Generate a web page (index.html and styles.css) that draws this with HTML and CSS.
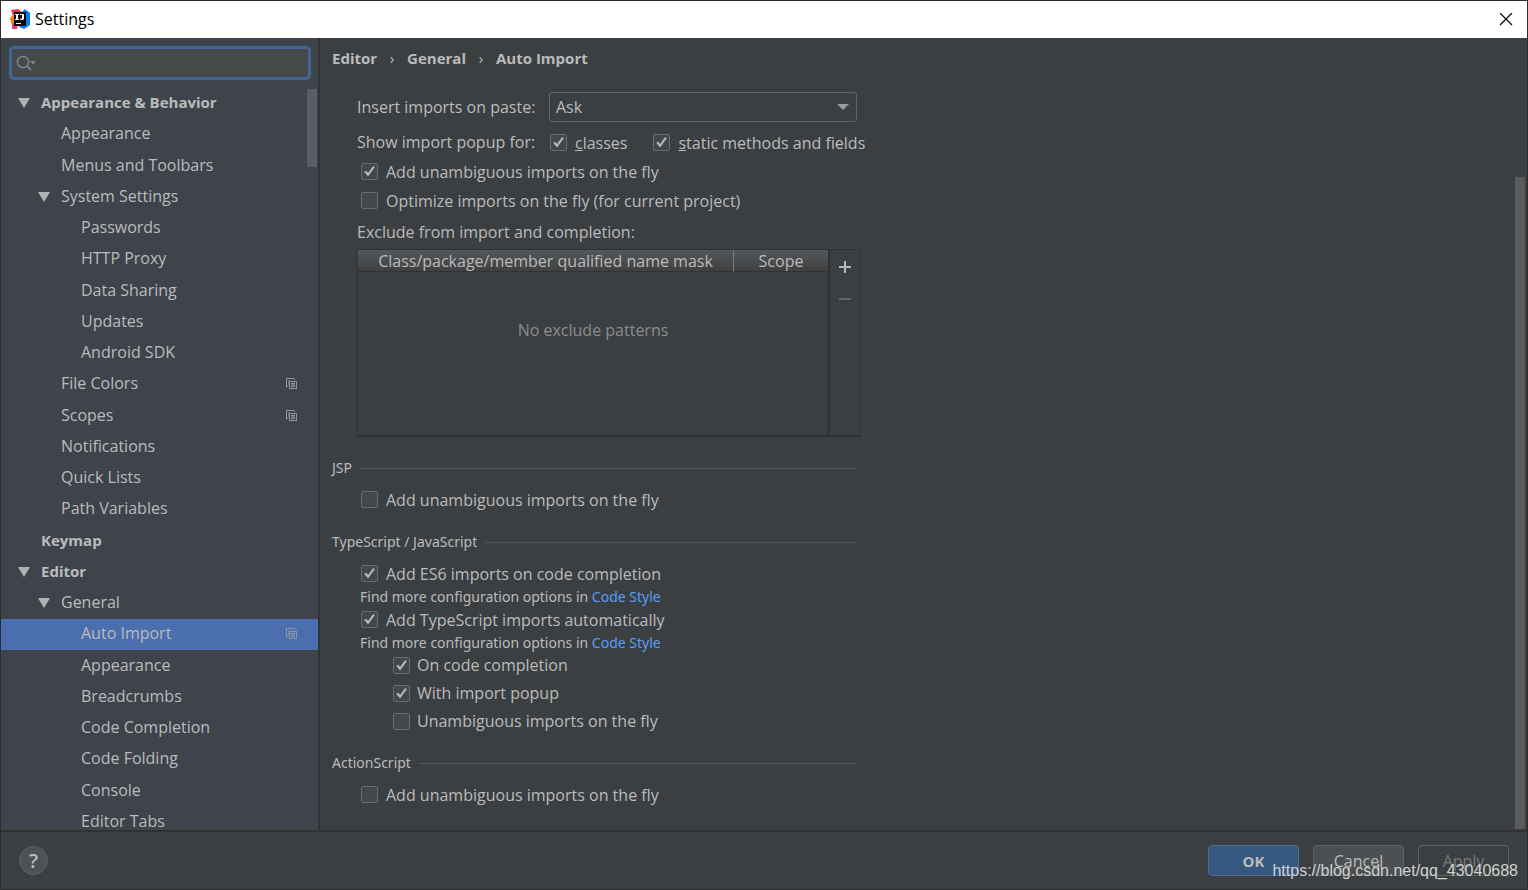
FILE: index.html
```html
<!DOCTYPE html>
<html lang="en">
<head>
<meta charset="utf-8">
<title>Settings</title>
<link rel="stylesheet" href="styles.css">
</head>
<body>
<svg class="defs" aria-hidden="true">
  <symbol id="copy" viewBox="0 0 12 12"><path d="M0 1h9v1H1v7h1v1H0z" fill="currentColor"/><path d="M8 2h1v1H3v6H2V3h6z" fill="currentColor" opacity=".45"/><path fill-rule="evenodd" d="M3 4h8v8H3zM4 5v6h6V5z" fill="currentColor"/><path d="M5 6h4v1H5zM5 7.500h4v1H5zM5 9h4v1H5z" fill="currentColor"/></symbol>
  <symbol id="arrow" viewBox="0 0 12 12"><path d="M0 2h12L6 12z" fill="currentColor"/></symbol>
</svg>
<div class="window">
  <header class="titlebar">
    <svg class="logo" viewBox="0 0 20 20" aria-hidden="true">
      <path d="M1 0l7-1 4 3-2 8-8 2-1-4 2-2z" fill="#f5315f"/>
      <path d="M0 8l4-4 3 8-2 5-4-4z" fill="#fc801d"/>
      <path d="M2 13l6 2-1 4-5 0z" fill="#e8417c"/>
      <path d="M12 2l3-3 5 4v12l-6 4-5-2z" fill="#087cfa"/>
      <path d="M4 2h12v14H4z" fill="#0b0b0d"/>
      <path d="M5 4h4v1H8v4h1v1H5V9h1V5H5zM10 4h4v5l-1 1h-2l-1-1 1-1 1 1V5h-2zM6 13h5v1H6z" fill="#fff"/>
    </svg>
    <h1 class="title">Settings</h1>
    <button class="close" aria-label="Close"><svg viewBox="0 0 14 14"><path d="M1 0l12 12M13 0L1 12" stroke="#000" stroke-width="1.200"/></svg></button>
  </header>
  <div class="panes">
    <aside class="sidebar">
      <div class="search">
        <svg class="search-icon" viewBox="0 0 21 16" aria-hidden="true"><circle cx="7" cy="7" r="5.600" fill="none" stroke="#7d8488" stroke-width="1.500"/><path d="M11 11l4 4" stroke="#7d8488" stroke-width="1.800"/><path d="M14 6h6l-3 3.500z" fill="#7d8488"/></svg>
        <input class="search-input" type="text" aria-label="Search settings">
      </div>
      <nav class="tree-wrap" aria-label="Settings categories">
        <ul class="tree">
          <li class="node root"><svg class="twisty"><use href="#arrow"/></svg>Appearance &amp; Behavior</li>
          <li class="node level-2">Appearance</li>
          <li class="node level-2">Menus and Toolbars</li>
          <li class="node level-2"><svg class="twisty"><use href="#arrow"/></svg>System Settings</li>
          <li class="node level-3">Passwords</li>
          <li class="node level-3">HTTP Proxy</li>
          <li class="node level-3">Data Sharing</li>
          <li class="node level-3">Updates</li>
          <li class="node level-3">Android SDK</li>
          <li class="node level-2">File Colors<svg class="badge"><use href="#copy"/></svg></li>
          <li class="node level-2">Scopes<svg class="badge"><use href="#copy"/></svg></li>
          <li class="node level-2">Notifications</li>
          <li class="node level-2">Quick Lists</li>
          <li class="node level-2">Path Variables</li>
          <li class="node root">Keymap</li>
          <li class="node root"><svg class="twisty"><use href="#arrow"/></svg>Editor</li>
          <li class="node level-2"><svg class="twisty"><use href="#arrow"/></svg>General</li>
          <li class="node level-3 selected">Auto Import<svg class="badge"><use href="#copy"/></svg></li>
          <li class="node level-3">Appearance</li>
          <li class="node level-3">Breadcrumbs</li>
          <li class="node level-3">Code Completion</li>
          <li class="node level-3">Code Folding</li>
          <li class="node level-3">Console</li>
          <li class="node level-3">Editor Tabs</li>
        </ul>
        <div class="tree-thumb"></div>
      </nav>
    </aside>
    <main class="content">
      <div class="page">
        <nav class="crumbs" aria-label="Breadcrumb"><span>Editor</span><span class="sep">›</span><span>General</span><span class="sep">›</span><span>Auto Import</span></nav>
        <div class="java">
          <div class="paste-row">
            <label class="row-label" for="paste">Insert imports on paste:</label>
            <div class="select-wrap">
              <select id="paste" class="select"><option>Ask</option></select>
              <svg class="select-arrow" viewBox="0 0 12 6" aria-hidden="true"><path d="M0 0h12L6 6z" fill="#9a9da0"/></svg>
            </div>
          </div>
          <div class="popup-row">
            <span class="row-label">Show import popup for:</span>
            <label class="check"><input type="checkbox" checked><span><u>c</u>lasses</span></label>
            <label class="check"><input type="checkbox" checked><span><u>s</u>tatic methods and fields</span></label>
          </div>
          <label class="check inset"><input type="checkbox" checked><span>Add unambiguous imports on the fly</span></label>
          <label class="check inset"><input type="checkbox"><span>Optimize imports on the fly (for current project)</span></label>
          <div class="table-label" id="exclude">Exclude from import and completion:</div>
          <div class="exclude">
            <table class="table" aria-labelledby="exclude">
              <thead><tr><th class="mask">Class/package/member qualified name mask</th><th>Scope</th></tr></thead>
              <tbody><tr><td colspan="2">No exclude patterns</td></tr></tbody>
            </table>
            <div class="tools">
              <button class="tool" aria-label="Add"><svg viewBox="0 0 14 14"><path d="M6 1h2v5h5v2H8v5H6V8H1V6h5z" fill="#b4b6b8"/></svg></button>
              <button class="tool" aria-label="Remove" disabled><svg viewBox="0 0 14 14"><path d="M1 6h12v2H1z" fill="#626466"/></svg></button>
            </div>
          </div>
        </div>
        <h2 class="section">JSP</h2>
        <label class="check inset"><input type="checkbox"><span>Add unambiguous imports on the fly</span></label>
        <h2 class="section">TypeScript / JavaScript</h2>
        <label class="check inset"><input type="checkbox" checked><span>Add ES6 imports on code completion</span></label>
        <p class="hint">Find more configuration options in <a href="#">Code Style</a></p>
        <label class="check inset"><input type="checkbox" checked><span>Add TypeScript imports automatically</span></label>
        <p class="hint">Find more configuration options in <a href="#">Code Style</a></p>
        <div class="nested">
          <label class="check"><input type="checkbox" checked><span>On code completion</span></label>
          <label class="check"><input type="checkbox" checked><span>With import popup</span></label>
          <label class="check"><input type="checkbox"><span>Unambiguous imports on the fly</span></label>
        </div>
        <h2 class="section">ActionScript</h2>
        <label class="check inset"><input type="checkbox"><span>Add unambiguous imports on the fly</span></label>
      </div>
      <div class="scrollbar"></div>
    </main>
  </div>
  <footer class="footer">
    <button class="help" aria-label="Help">?</button>
    <div class="actions">
      <button class="btn primary">OK</button>
      <button class="btn">Cancel</button>
      <button class="btn apply" disabled>Apply</button>
    </div>
  </footer>
  <div class="watermark">https://blog.csdn.net/qq_43040688</div>
</div>
</body>
</html>
```
FILE: styles.css
```css
* { box-sizing: border-box; }
body {
  margin: 0;
  background: #2b2b2b;
  color: #bbbbbb;
  font: 16px/20px "Open Sans", "Noto Sans", sans-serif;
}
button, input, select { font: inherit; color: inherit; }
button { padding: 0; }
.defs { display: none; }

.window {
  position: relative;
  display: flex;
  flex-direction: column;
  height: 100vh;
  border: 1px solid #2b2b2b;
  background: #3c3f41;
  overflow: hidden;
}

/* Title bar */
.titlebar {
  display: flex;
  align-items: center;
  flex: none;
  height: 37px;
  padding: 0 14px 0 9px;
  gap: 5px;
  background: #fff;
  color: #000;
}
.logo { width: 20px; height: 20px; overflow: visible; }
.title { flex: 1; margin: 0; padding-bottom: 1px; font-size: 16px; font-weight: 400; }
.close { display: flex; border: 0; background: none; }
.close svg { width: 14px; height: 14px; }

.panes { flex: 1; display: flex; min-height: 0; }

/* Category tree */
.sidebar {
  flex: none;
  display: flex;
  flex-direction: column;
  width: 319px;
  border-right: 2px solid #323232;
  background: #3f434c;
}
.search {
  display: flex;
  align-items: center;
  flex: none;
  height: 34px;
  margin: 8px 7px 8px 8px;
  padding: 0 4px;
  border: 3px solid #41658f;
  border-radius: 5px;
  background: #45494a;
}
.search-icon { width: 21px; height: 16px; }
.search-input { flex: 1; min-width: 0; border: 0; outline: 0; background: none; }
.tree-wrap { position: relative; flex: 1; min-height: 0; overflow: hidden; }
.tree { margin: 0; padding: 0; list-style: none; }
.node {
  display: flex;
  align-items: center;
  height: 31px;
  padding: 0 20px 3px 40px;
}
.node:nth-child(4n+3) { height: 32px; }
.root { font-size: 15px; font-weight: 700; }
.level-2 { padding-left: 60px; }
.level-3 { padding-left: 80px; }
.selected { background: #4b6eaf; }
.twisty { width: 12px; height: 12px; margin: 0 11px 0 -23px; color: #afb1b3; }
.badge { width: 12px; height: 12px; margin-left: auto; color: #8e979f; }
.tree-thumb {
  position: absolute;
  top: 1px;
  right: 1px;
  width: 10px;
  height: 78px;
  background: #5a5d65;
}

/* Settings page */
.content { flex: 1; display: flex; justify-content: space-between; min-width: 0; }
.page { width: 541px; padding-left: 12px; }
.crumbs { display: flex; height: 40px; margin-bottom: 14px; align-items: center; font-size: 15px; font-weight: 700; }
.sep { width: 30px; text-align: center; font-weight: 400; }
.java { padding: 0 0 3px 25px; }
.paste-row { display: flex; align-items: center; margin-bottom: 6px; padding-right: 4px; }
.row-label { width: 176px; margin-right: 16px; padding-bottom: 1px; text-align: right; white-space: nowrap; }
.select-wrap { position: relative; flex: 1; display: flex; }
.select {
  appearance: none;
  width: 100%;
  height: 30px;
  padding: 0 6px;
  border: 1px solid #646464;
  border-radius: 3px;
  background: #3c3f41;
}
.select-arrow { position: absolute; top: 12px; right: 8px; width: 12px; height: 6px; pointer-events: none; }
.popup-row { display: flex; align-items: center; }
.popup-row .row-label { margin-right: 17px; }
.popup-row .check + .check { margin-left: 26px; }
.check { display: flex; align-items: center; gap: 8px; height: 29px; white-space: nowrap; }
.inset { margin-left: 29px; }
.java .inset { margin-left: 4px; }
.check input {
  appearance: none;
  flex: none;
  width: 17px;
  height: 17px;
  margin: 0;
  border: 1px solid #6b6b6b;
  border-radius: 2px;
  background: #43494a;
}
.check input:checked {
  background: #43494a url("data:image/svg+xml,%3Csvg xmlns='http://www.w3.org/2000/svg' viewBox='0 0 15 15'%3E%3Cpath d='M3.200 7.300L6 10.800L12 2.600' fill='none' stroke='%23b4b6b8' stroke-width='2.200'/%3E%3C/svg%3E") center / 15px 15px;
}
.table-label { display: flex; align-items: center; height: 34px; }
.exclude { display: flex; height: 188px; border: 1px solid #323232; border-bottom-width: 2px; }
.table { flex: 1; border-collapse: separate; border-spacing: 0; height: 100%; }
.table th {
  height: 22px;
  padding: 0;
  border-bottom: 1px solid #323232;
  background: linear-gradient(#55585a, #3e4042);
  font-weight: 400;
  line-height: 20px;
}
.table .mask { width: 376px; border-right: 1px solid #77797b; }
.table td { padding: 48px 0 0; vertical-align: top; text-align: center; color: #8c8c8c; }
.tools { width: 32px; padding-top: 1px; border-left: 2px solid #323232; }
.tool { display: flex; align-items: center; justify-content: center; width: 100%; height: 32px; border: 0; background: none; }
.tool svg { width: 14px; height: 14px; }

.section {
  display: flex;
  align-items: center;
  gap: 8px;
  height: 20px;
  margin: 18px 4px 7px 0;
  font-family: "Noto Sans", sans-serif;
  font-size: 14px;
  font-weight: 400;
}
.section::after { content: ""; flex: 1; height: 1px; background: #515355; }
.hint { margin: 0 0 0 28px; font: 14px/17px "Noto Sans", sans-serif; }
.hint a { color: #589df6; text-decoration: none; }
.nested { padding-left: 61px; }
.nested .check { height: 28px; gap: 7px; }
.scrollbar { width: 10px; margin: 139px 2px 1px 0; background: #595b5d; }

/* Footer */
.footer {
  display: flex;
  align-items: center;
  justify-content: space-between;
  flex: none;
  height: 59px;
  padding: 0 18px;
  border-top: 2px solid #323232;
}
.help {
  width: 29px;
  height: 29px;
  border: 1px solid #5e6162;
  border-radius: 50%;
  background: #4e5254;
  font-size: 20px;
  font-weight: 600;
}
.actions { display: flex; gap: 14px; }
.btn { width: 91px; height: 31px; border: 1px solid #5e6162; border-radius: 4px; background: #4c5052; }
.primary { border-color: #4c708c; background: #365880; font-size: 15px; font-weight: 700; }
.apply { background: none; color: #777777; }
.watermark {
  position: absolute;
  right: 9px;
  bottom: 8px;
  color: #d0d1d1;
  font: 16px/20px "Liberation Sans", Arial, sans-serif;
}
```
